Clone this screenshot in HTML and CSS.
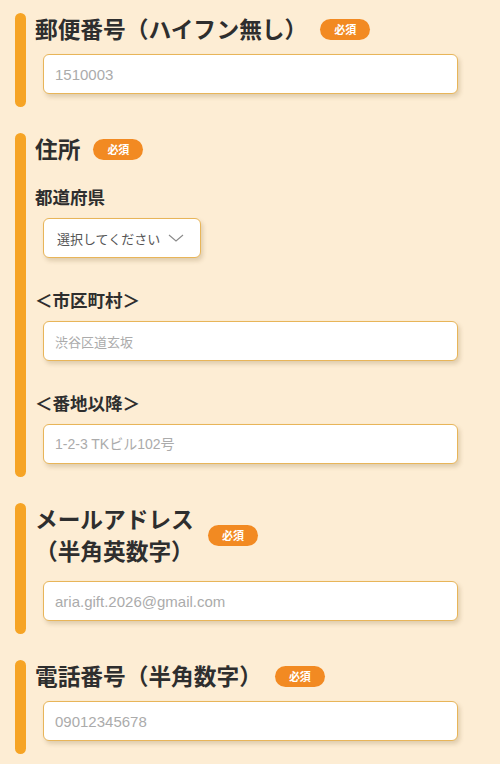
FILE: index.html
```html
<!DOCTYPE html>
<html lang="ja">
<head>
<meta charset="utf-8">
<title>フォーム</title>
<link rel="stylesheet" href="styles.css">
</head>
<body>
<form class="form">
  <section class="section">
    <div class="bar"></div>
    <div class="content">
      <div class="header">
        <h2 class="title">郵便番号（ハイフン無し）</h2>
        <span class="badge">必須</span>
      </div>
      <input class="field" type="text" placeholder="1510003">
    </div>
  </section>

  <section class="section">
    <div class="bar"></div>
    <div class="content">
      <div class="header">
        <h2 class="title">住所</h2>
        <span class="badge">必須</span>
      </div>
      <h3 class="sub sub-first">都道府県</h3>
      <div class="select">
        <span class="select-text">選択してください</span>
        <svg class="chev" width="16" height="8" viewBox="0 0 16 8"><path d="M1 1 L8 7 L15 1" fill="none" stroke="#8a8a8a" stroke-width="1.1"/></svg>
      </div>
      <h3 class="sub">＜市区町村＞</h3>
      <input class="field field-cjk" type="text" placeholder="渋谷区道玄坂">
      <h3 class="sub">＜番地以降＞</h3>
      <input class="field field-mixed" type="text" placeholder="1-2-3 TKビル102号">
    </div>
  </section>

  <section class="section">
    <div class="bar"></div>
    <div class="content">
      <div class="header header-wrap">
        <h2 class="title title-narrow">メールアドレス（半角英数字）</h2>
        <span class="badge">必須</span>
      </div>
      <input class="field" type="text" placeholder="aria.gift.2026@gmail.com">
    </div>
  </section>

  <section class="section">
    <div class="bar"></div>
    <div class="content">
      <div class="header">
        <h2 class="title">電話番号（半角数字）</h2>
        <span class="badge">必須</span>
      </div>
      <input class="field" type="text" placeholder="09012345678">
    </div>
  </section>
</form>
</body>
</html>
```

FILE: styles.css
```css
html, body {
  margin: 0;
  padding: 0;
}
body {
  background: #fdedd4;
  font-family: "Noto Sans CJK JP", "Noto Sans", sans-serif;
  color: #333333;
  width: 500px;
  height: 764px;
  overflow: hidden;
}
.form {
  padding-top: 13px;
  display: flex;
  flex-direction: column;
  gap: 26px;
}
.section {
  display: flex;
  gap: 9px;
  padding-left: 15px;
  padding-right: 42px;
}
.bar {
  width: 11px;
  flex: 0 0 11px;
  border-radius: 6px;
  background: #f6a425;
}
.content {
  flex: 1;
  padding-bottom: 13px;
  display: flex;
  flex-direction: column;
}
.header {
  display: flex;
  align-items: center;
  gap: 13px;
  margin-bottom: 9px;
}
.header-wrap {
  margin-bottom: 14px;
}
.title {
  margin: 0;
  font-size: 22.7px;
  line-height: 32px;
  font-weight: 700;
  color: #2e2e2e;
}
.title-narrow {
  max-width: 160px;
}
.badge {
  display: inline-flex;
  align-items: center;
  justify-content: center;
  width: 50px;
  height: 21px;
  border-radius: 11px;
  background: #f28a22;
  color: #ffffff;
  font-size: 11px;
  font-weight: 700;
  line-height: 1;
  flex: 0 0 auto;
}
.sub {
  margin: 30px 0 9px 0;
  font-size: 17.5px;
  line-height: 24px;
  font-weight: 700;
  color: #2e2e2e;
}
.sub-first {
  margin-top: 11px;
}
.field {
  margin: 0 0 0 8px;
  box-sizing: border-box;
  height: 40px;
  width: 415px;
  border: 1.5px solid #e8b559;
  border-radius: 6px;
  background: #ffffff;
  box-shadow: 2px 3px 4px rgba(120, 90, 40, 0.22);
  padding: 0 11px;
  font-family: "Liberation Sans", "Noto Sans CJK JP", sans-serif;
  font-size: 15px;
  color: #333;
  outline: none;
}
.field-cjk {
  font-family: "Noto Sans CJK JP", sans-serif;
  font-size: 13px;
}
.field-mixed {
  font-size: 14px;
}
.field::placeholder {
  color: #ababab;
}
.select {
  margin-left: 8px;
  box-sizing: border-box;
  height: 40px;
  width: 158px;
  border: 1.5px solid #e8b559;
  border-radius: 6px;
  background: #ffffff;
  box-shadow: 2px 3px 4px rgba(120, 90, 40, 0.22);
  padding: 0 16px 0 13px;
  display: flex;
  align-items: center;
  justify-content: space-between;
}
.select-text {
  font-size: 13px;
  color: #555555;
}
.chev {
  display: block;
}
```
